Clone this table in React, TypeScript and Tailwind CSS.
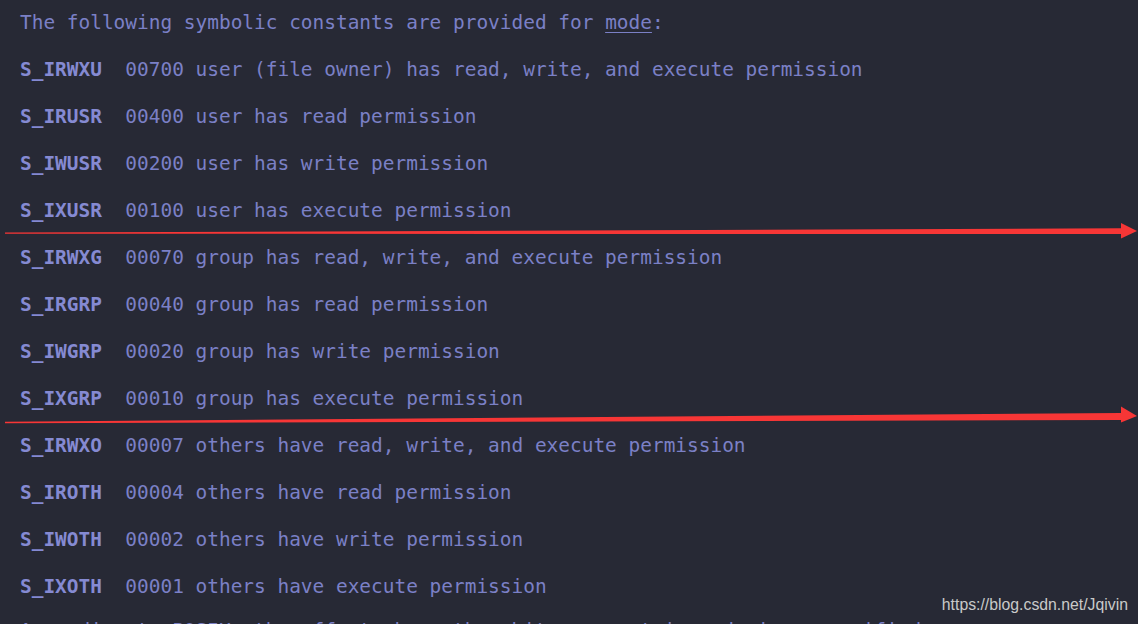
import React from "react";

const rows: [string, string, string][] = [
  ["S_IRWXU", "00700", "user (file owner) has read, write, and execute permission"],
  ["S_IRUSR", "00400", "user has read permission"],
  ["S_IWUSR", "00200", "user has write permission"],
  ["S_IXUSR", "00100", "user has execute permission"],
  ["S_IRWXG", "00070", "group has read, write, and execute permission"],
  ["S_IRGRP", "00040", "group has read permission"],
  ["S_IWGRP", "00020", "group has write permission"],
  ["S_IXGRP", "00010", "group has execute permission"],
  ["S_IRWXO", "00007", "others have read, write, and execute permission"],
  ["S_IROTH", "00004", "others have read permission"],
  ["S_IWOTH", "00002", "others have write permission"],
  ["S_IXOTH", "00001", "others have execute permission"],
];

export default function App() {
  return (
    <div className="relative w-[1138px] h-[624px] overflow-hidden bg-[#272935] text-[#7b80c6] [font-family:'DejaVu_Sans_Mono',monospace] text-[19.45px]">
      <div className="flex flex-col pl-[20px] -mt-[1px]">
        <div className="h-[47px] flex items-center whitespace-pre">
          The following symbolic constants are provided for <span className="underline underline-offset-[3px]">mode</span>:
        </div>
        {rows.map(([c, v, d]) => (
          <div key={c} className="h-[47px] flex items-center whitespace-pre">
            <span className="font-bold text-[#858ad2]">{c}</span>
            <span>{"  " + v + " " + d}</span>
          </div>
        ))}
        <div className="h-[47px] flex items-center whitespace-pre -mt-[3px]">
          According to POSIX, the effect when other bits are set in mode is unspecified.
        </div>
      </div>
      <svg className="absolute left-0 top-0" width="1138" height="624" viewBox="0 0 1138 624">
        <polygon points="5,232.6 1121,228.3 1121,223 1137,231 1121,238.5 1121,234 5,233.8" fill="#f73636" />
        <polygon points="5,421.8 1121,413 1121,406.5 1137,416 1121,422.5 1121,420 5,423.2" fill="#f73636" />
      </svg>
      <div className="absolute right-[10px] top-[593px] text-[15.8px] text-[#c9c9c9] [font-family:'Liberation_Sans',Arial,sans-serif]">
        https://blog.csdn.net/Jqivin
      </div>
    </div>
  );
}
